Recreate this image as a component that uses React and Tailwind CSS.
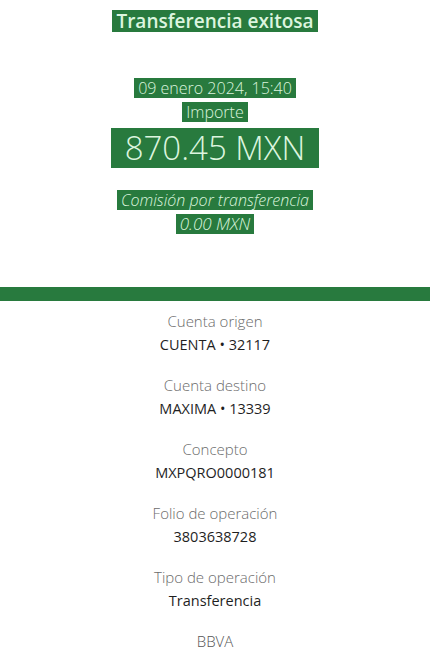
export default function App() {
  const rows = [
    ["Cuenta origen", "CUENTA • 32117"],
    ["Cuenta destino", "MAXIMA • 13339"],
    ["Concepto", "MXPQRO0000181"],
    ["Folio de operación", "3803638728"],
    ["Tipo de operación", "Transferencia"],
  ];
  const hl = "bg-[#287a3e] text-[#dcf5df] px-[4px]";
  return (
    <div className="w-[430px] h-[661px] overflow-hidden bg-white flex flex-col items-center" style={{ fontFamily: "'Open Sans', 'Liberation Sans', sans-serif" }}>
      <div className="pt-[10px] h-[32px] flex items-start">
        <span className={`${hl} text-[19px] font-semibold leading-[22px]`}>Transferencia exitosa</span>
      </div>
      <div className="mt-[46px] flex flex-col items-center">
        <span className={`${hl} text-[16px] font-light leading-[20px]`}>09 enero 2024, 15:40</span>
        <span className={`${hl} mt-[4px] text-[16px] font-light leading-[20px]`}>Importe</span>
        <span className={`${hl} mt-[6px] text-[33px] font-light leading-[40px] px-[14px]`}>870.45 MXN</span>
        <span className={`${hl} mt-[22px] text-[16px] font-light italic leading-[20px]`}>Comisión por transferencia</span>
        <span className={`${hl} mt-[4px] text-[17px] font-light italic leading-[20px]`}>0.00 MXN</span>
      </div>
      <div className="mt-[53px] w-full h-[14px] bg-[#287a3e]" />
      <div className="mt-[10px] flex flex-col items-center w-full">
        {rows.map(([l, v]) => (
          <div key={l} className="flex flex-col items-center h-[64px]">
            <span className="text-[15px] font-light text-[#6b6b6b] leading-[20px]">{l}</span>
            <span className="mt-[4px] text-[14.5px] text-[#1f1f1f] leading-[20px]">{v}</span>
          </div>
        ))}
        <span className="text-[15px] font-light text-[#555] leading-[20px]">BBVA</span>
      </div>
    </div>
  );
}
